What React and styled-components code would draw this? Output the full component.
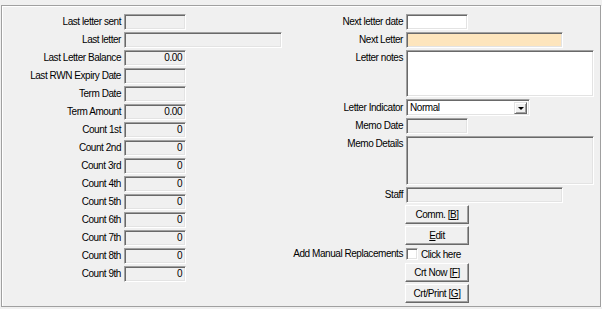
import React from "react";
import styled, { createGlobalStyle } from "styled-components";

const Global = createGlobalStyle`
  html, body { margin: 0; padding: 0; background: #f0f0f0; }
  body {
    font-family: "Liberation Sans", Arial, sans-serif;
    font-size: 10px;
    letter-spacing: -0.45px;
    color: #000;
  }
`;

const Panel = styled.div`
  box-sizing: border-box;
  margin: 5px 0 0 1px;
  width: 600px;
  height: 302px;
  border: 1px solid #a0a0a0;
  box-shadow: inset 1px 1px 0 #fff, 1px 1px 0 #fff;
  display: flex;
  align-items: flex-start;
  gap: 8px;
  padding: 8px 0 0 0;
`;

const Form = styled.div`
  display: grid;
  grid-template-columns: ${(p) => p.$labelWidth}px auto;
  column-gap: 3px;
  row-gap: 2px;
  align-items: center;
  justify-items: start;
`;

const Label = styled.div`
  justify-self: stretch;
  text-align: right;
  white-space: nowrap;
  line-height: 12px;
  ${(p) => p.$top && `align-self: start; padding-top: 2px;`}
`;

const Field = styled.div`
  box-sizing: border-box;
  width: ${(p) => p.$w}px;
  height: ${(p) => p.$h || 16}px;
  background: ${(p) => p.$bg || "#f0f0f0"};
  border: 1px solid;
  border-color: #a0a0a0 #fff #fff #a0a0a0;
  box-shadow: inset 1px 1px 0 #696969, inset -1px -1px 0 #e3e3e3;
  text-align: right;
  padding: 0 3px;
  line-height: 14px;
  white-space: nowrap;
`;

const Select = styled.div`
  box-sizing: border-box;
  width: 124px;
  height: 17px;
  background: #fff;
  border: 1px solid;
  border-color: #a0a0a0 #fff #fff #a0a0a0;
  box-shadow: inset 1px 1px 0 #696969, inset -1px -1px 0 #e3e3e3;
  display: flex;
  align-items: center;
  justify-content: space-between;
  padding: 0 2px 0 3px;
  line-height: 14px;
`;

const DropButton = styled.div`
  box-sizing: border-box;
  width: 13px;
  height: 12px;
  background: #f0f0f0;
  border: 1px solid;
  border-color: #e3e3e3 #696969 #696969 #e3e3e3;
  box-shadow: inset 1px 1px 0 #fff, inset -1px -1px 0 #a0a0a0;
  display: flex;
  align-items: center;
  justify-content: center;
`;

const Arrow = styled.div`
  width: 0;
  height: 0;
  border-left: 3px solid transparent;
  border-right: 3px solid transparent;
  border-top: 3px solid #000;
  margin-top: 1px;
`;

const Button = styled.div`
  box-sizing: border-box;
  width: 64px;
  height: 19px;
  margin-left: -1px;
  background: #f0f0f0;
  border: 1px solid;
  border-color: #fff #696969 #696969 #fff;
  box-shadow: inset -1px -1px 0 #a0a0a0;
  display: flex;
  align-items: center;
  justify-content: center;
  line-height: 12px;
  white-space: nowrap;
`;

const CheckRow = styled.div`
  display: flex;
  align-items: center;
  gap: 3px;
  height: 14px;
`;

const Box = styled.div`
  box-sizing: border-box;
  width: 12px;
  height: 12px;
  background: #fff;
  border: 1px solid;
  border-color: #a0a0a0 #fff #fff #a0a0a0;
  box-shadow: inset 1px 1px 0 #696969, inset -1px -1px 0 #e3e3e3;
`;

const leftRows = [
  ["Last letter sent", 62, ""],
  ["Last letter", 158, ""],
  ["Last Letter Balance", 62, "0.00"],
  ["Last RWN Expiry Date", 62, ""],
  ["Term Date", 62, ""],
  ["Term Amount", 62, "0.00"],
  ["Count 1st", 62, "0"],
  ["Count 2nd", 62, "0"],
  ["Count 3rd", 62, "0"],
  ["Count 4th", 62, "0"],
  ["Count 5th", 62, "0"],
  ["Count 6th", 62, "0"],
  ["Count 7th", 62, "0"],
  ["Count 8th", 62, "0"],
  ["Count 9th", 62, "0"],
];

export default function App() {
  return (
    <>
      <Global />
      <Panel>
        <Form $labelWidth={119}>
          {leftRows.map(([label, w, v]) => (
            <React.Fragment key={label}>
              <Label>{label}</Label>
              <Field $w={w}>{v}</Field>
            </React.Fragment>
          ))}
        </Form>
        <Form $labelWidth={113}>
          <Label>Next letter date</Label>
          <Field $w={62} $bg="#fff" />
          <Label>Next Letter</Label>
          <Field $w={157} $bg="#fde5bd" />
          <Label $top>Letter notes</Label>
          <Field $w={188} $h={47} $bg="#fff" />
          <Label>Letter Indicator</Label>
          <Select>
            <span>Normal</span>
            <DropButton>
              <Arrow />
            </DropButton>
          </Select>
          <Label>Memo Date</Label>
          <Field $w={62} />
          <Label $top>Memo Details</Label>
          <Field $w={188} $h={49} />
          <Label>Staff</Label>
          <Field $w={157} />
          <span />
          <Button>
            Comm. [<u>B</u>]
          </Button>
          <span />
          <Button>
            <u>E</u>dit
          </Button>
          <Label>Add Manual Replacements</Label>
          <CheckRow>
            <Box />
            <span>Click here</span>
          </CheckRow>
          <span />
          <Button>
            Crt Now [<u>F</u>]
          </Button>
          <span />
          <Button>
            Crt/Print [<u>G</u>]
          </Button>
        </Form>
      </Panel>
    </>
  );
}
